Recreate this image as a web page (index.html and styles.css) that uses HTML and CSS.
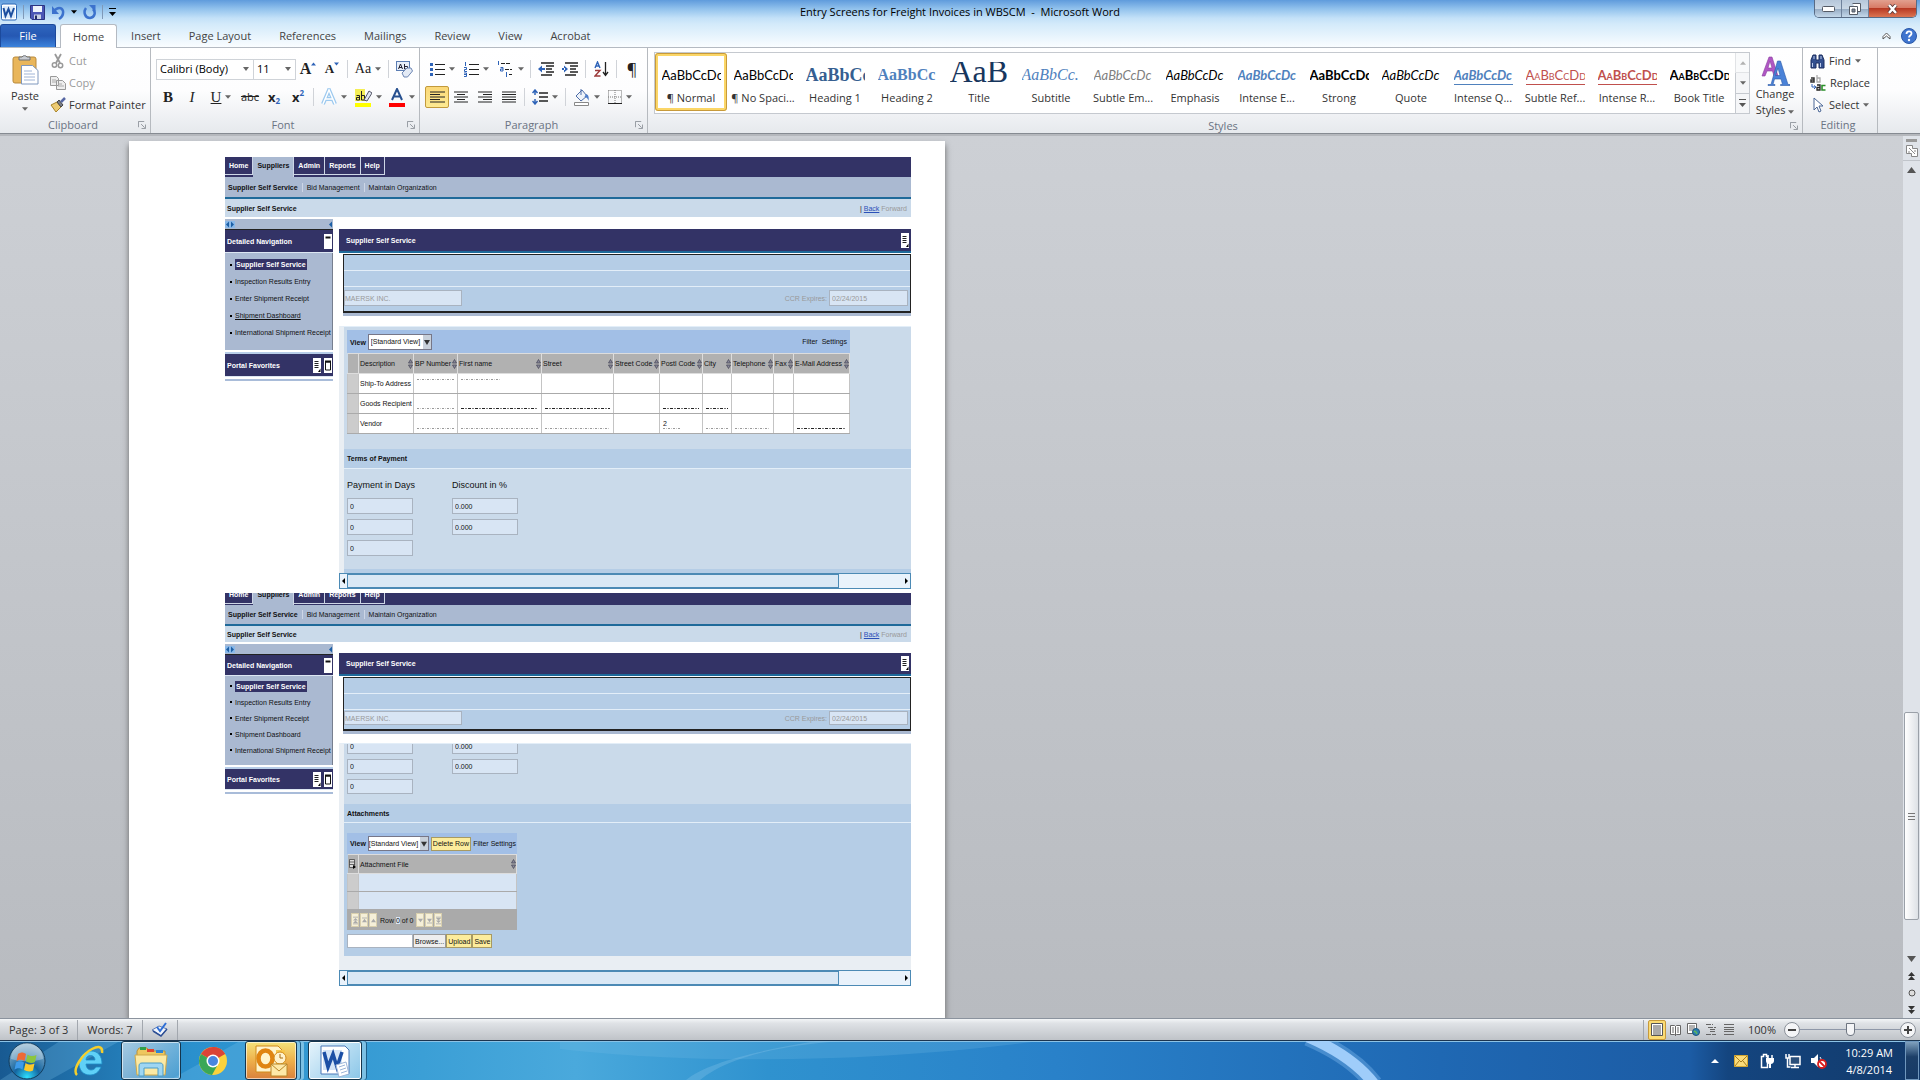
FILE: index.html
```
<!DOCTYPE html>
<html lang="en">
<head>
    <meta charset="UTF-8">
    <meta name="viewport" content="width=device-width, initial-scale=1.0">
    <title>Entry Screens for Freight Invoices in WBSCM - Microsoft Word</title>
    <link rel="stylesheet" href="styles.css">
</head>
<body>

    <!-- shared icons -->
    <svg class="sprite" aria-hidden="true">
        <symbol id="caret" viewBox="0 0 7 4"><path d="M0 0h7L3.500 4z" fill="#666"/></symbol>
        <symbol id="launcher" viewBox="0 0 9 9"><path d="M.5 7V.5H7M8.500 4v4.500H4M3.500 3.500l4 4" fill="none" stroke="#8a8f96"/></symbol>
        <symbol id="word" viewBox="0 0 16 18"><rect x=".5" y="1" width="15" height="16" rx="1.500" fill="#fff" stroke="#2b66b5"/><rect x="2" y="3" width="12" height="12" fill="#dcebfa"/><path d="M2.500 5l2 8 3-7 2.500 7L13 5" fill="none" stroke="#1d4f9f" stroke-width="2"/></symbol>
        <symbol id="sort" viewBox="0 0 5 10"><path d="M.5 4l2-3.500 2 3.500zM.5 6l2 3.500 2-3.500z" fill="#889" stroke="#445" stroke-width=".7"/></symbol>
        <symbol id="menu-page" viewBox="0 0 8 15"><path d="M0 0h8v15H0z" fill="#fff"/><path d="M1.500 3.500h4M1.500 5.500h4M1.500 7.500h4M1.500 9.500h4" stroke="#222"/><path d="M7.500 10.500v3.500H5z"/></symbol>
        <symbol id="window-min" viewBox="0 0 8 15"><path d="M0 0h8v15H0z" fill="#fff"/><path d="M1.500 3.500h5" stroke="#111" stroke-width="2"/></symbol>
        <symbol id="window-max" viewBox="0 0 8 15"><path d="M0 0h8v15H0z" fill="#fff"/><path d="M1.500 4v8h5V4z" fill="none" stroke="#111"/><path d="M1 3.500h6" stroke="#111" stroke-width="2"/></symbol>
        <symbol id="arrow-left" viewBox="0 0 4 8"><path d="M4 0v8L0 4z"/></symbol>
        <symbol id="arrow-right" viewBox="0 0 4 8"><path d="M0 0v8l4-4z"/></symbol>
        <symbol id="lines" viewBox="0 0 14 12"><path d="M0 1h14M0 3.500h14M0 6h14M0 8.500h14M0 11h14" stroke="#222" stroke-width="1.200"/></symbol>
    </svg>

    <header class="titlebar">
        <div class="quick-access">
            <svg class="app-icon" viewBox="0 0 16 18"><use href="#word"/></svg>
            <span class="qa-sep"></span>
            <button class="qa" aria-label="Save"><svg width="15" height="15" viewBox="0 0 15 15"><path d="M.5.500h14v14H2l-1.500-1.500z" fill="#4a55b5" stroke="#2b3380"/><path d="M3 1h9v6H3z" fill="#eef3fb"/><path d="M4 9.500h7V14H4z" fill="#c8d0e4"/><path d="M5 10.500h2V14H5z" fill="#222a66"/></svg></button>
            <button class="qa" aria-label="Undo"><svg width="14" height="15" viewBox="0 0 14 15"><path d="M3 6c3-4 8-4 9 0 .5 3-1 6-4 8" fill="none" stroke="#3c72cd" stroke-width="2.500"/><path d="M1 1v8h7z" fill="#3c72cd"/></svg></button>
            <svg class="qa-caret" viewBox="0 0 7 4"><path d="M0 0h7L3.500 4z"/></svg>
            <button class="qa" aria-label="Repeat"><svg width="13" height="15" viewBox="0 0 13 15"><path d="M3 3c-3 4-1 10 4 10 5-.5 6-6 3-9" fill="none" stroke="#3c72cd" stroke-width="2.500"/><path d="M6 0h6.500v7z" fill="#3c72cd"/></svg></button>
            <span class="qa-sep"></span>
            <button class="qa" aria-label="Customize"><svg width="7" height="8" viewBox="0 0 7 8"><path d="M0 .500h7" stroke="#000"/><path d="M0 4h7L3.500 8z"/></svg></button>
        </div>
        <h1 class="doc-title">Entry Screens for Freight Invoices in WBSCM&nbsp; -&nbsp; Microsoft Word</h1>
        <div class="window-buttons">
            <button aria-label="Minimize"><svg width="13" height="6" viewBox="0 0 13 6"><rect x=".5" y=".5" width="12" height="5" rx="1" fill="#fff" stroke="#555b66"/></svg></button>
            <button aria-label="Restore"><svg width="12" height="12" viewBox="0 0 12 12"><path d="M3.500.500h8v8h-3M.5 3.500h8v8h-8z" fill="#fff" stroke="#555b66"/><path d="M3 6h3v3H3z" fill="#7d8796" stroke="#555b66"/></svg></button>
            <button class="close" aria-label="Close"><svg width="11" height="10" viewBox="0 0 11 10"><path d="M2 1l7 8M9 1L2 9" stroke="#533" stroke-width="4"/><path d="M2 1l7 8M9 1L2 9" stroke="#fff" stroke-width="2.500"/></svg></button>
        </div>
    </header>

    <nav class="ribbon-tabs">
        <button class="file-tab">File</button>
        <button class="active">Home</button>
        <button>Insert</button>
        <button>Page Layout</button>
        <button>References</button>
        <button>Mailings</button>
        <button>Review</button>
        <button>View</button>
        <button>Acrobat</button>
        <span class="spacer"></span>
        <button class="mini" aria-label="Minimize the Ribbon"><svg width="9" height="8" viewBox="0 0 9 8"><path d="M1 4.500L4.500 1 8 4.500V7L4.500 4 1 7z" fill="#fff" stroke="#555"/></svg></button>
        <button class="mini" aria-label="Help"><svg width="16" height="16" viewBox="0 0 16 16"><circle cx="8" cy="8" r="7.500" fill="#3f75cf" stroke="#2a58a8"/><path d="M5.500 6c0-3.500 5-3.500 5-.5 0 2-2.500 2-2.500 4" fill="none" stroke="#fff" stroke-width="1.800"/><circle cx="8" cy="12" r="1.200" fill="#fff"/></svg></button>
    </nav>

    <section class="ribbon">
        <div class="group clipboard">
            <div class="group-body">
                <button class="big paste">
                    <svg width="27" height="31" viewBox="0 0 27 31"><rect x="1" y="3" width="23" height="26" rx="2" fill="#e9b65b" stroke="#b98a3c"/><path d="M7 6V3h3a3 3 0 015 0h3v3z" fill="#c9ccd1" stroke="#6c7076"/><path d="M9.500 11.500h11l5.500 5V30H9.500z" fill="#fff" stroke="#7f97bd"/><path d="M12 17h8M12 20h11M12 23h11M12 26h11" stroke="#9fb4d6"/></svg>
                    <span>Paste</span>
                    <svg class="caret"><use href="#caret"/></svg>
                </button>
                <div class="stack">
                    <button class="small dim"><svg width="16" height="16" viewBox="0 0 16 16"><path d="M5 1l5 9M11 1L6 10" stroke="#999" stroke-width="1.800"/><circle cx="4.500" cy="12" r="2.200" fill="none" stroke="#999" stroke-width="1.500"/><circle cx="10.500" cy="12.500" r="2.200" fill="none" stroke="#999" stroke-width="1.500"/></svg>Cut</button>
                    <button class="small dim"><svg width="16" height="16" viewBox="0 0 16 16"><path d="M.5 1.500h6l2 2v7h-8zM6.500 5.500h6l3 3v6h-9z" fill="#eee" stroke="#999"/><path d="M2 5h4M2 7h4M8 9h4M8 11h6" stroke="#aaa"/></svg>Copy</button>
                    <button class="small"><svg width="16" height="16" viewBox="0 0 16 16"><path d="M1 8l6-3 4 5-5 5z" fill="#edcb72" stroke="#a98427"/><path d="M7 5l2-2 4 5-2 2z" fill="#777c88" stroke="#444"/><path d="M11 5l4-4" stroke="#5666a3" stroke-width="2.500"/></svg>Format Painter</button>
                </div>
            </div>
            <footer>Clipboard<svg class="launcher"><use href="#launcher"/></svg></footer>
        </div>

        <div class="group font">
            <div class="group-body rows">
                <div class="tools">
                    <select class="font-name" aria-label="Font"><option>Calibri (Body)</option></select>
                    <select class="font-size" aria-label="Font Size"><option>11</option></select>
                    <button class="tool grow" aria-label="Grow Font"><b>A</b><svg width="5" height="4" viewBox="0 0 7 4"><path d="M0 4h7L3.500 0z" fill="#2e63b8"/></svg></button>
                    <button class="tool shrink" aria-label="Shrink Font"><b>A</b><svg width="5" height="4" viewBox="0 0 7 4"><path d="M0 0h7L3.500 4z" fill="#2e63b8"/></svg></button>
                    <span class="sep"></span>
                    <button class="tool wide serif-aa">Aa<svg class="caret"><use href="#caret"/></svg></button>
                    <span class="sep"></span>
                    <button class="tool" aria-label="Clear Formatting"><svg width="17" height="17" viewBox="0 0 17 17"><rect x=".5" y=".5" width="13" height="9" fill="#e9f0fa" stroke="#5b7db3"/><path d="M2.500 8l2-5 2 5M3 6.500h3M8.500 3v5h3V5.500h-3" fill="none" stroke="#223"/><path d="M6 12l5-5h4l1.500 3-5 6H8z" fill="#e3eaf5" stroke="#6c85b3"/></svg></button>
                </div>
                <div class="tools">
                    <button class="tool glyph"><b>B</b></button>
                    <button class="tool glyph"><i>I</i></button>
                    <button class="tool glyph with-drop"><u>U</u><svg class="caret"><use href="#caret"/></svg></button>
                    <button class="tool strike"><s>abc</s></button>
                    <button class="tool script">x<sub>2</sub></button>
                    <button class="tool script">x<sup>2</sup></button>
                    <span class="sep"></span>
                    <button class="tool with-drop" aria-label="Text Effects"><svg width="16" height="18" viewBox="0 0 16 18"><path d="M2 16L8 2l6 14M4.500 11h7" fill="none" stroke="#9cc9ef" stroke-width="4"/><path d="M2 16L8 2l6 14M4.500 11h7" fill="none" stroke="#fff" stroke-width="1.500"/></svg><svg class="caret"><use href="#caret"/></svg></button>
                    <button class="tool with-drop highlight" aria-label="Text Highlight Color"><svg width="17" height="19" viewBox="0 0 17 19"><path d="M0 1h10v12H0z" fill="#f4ee55"/><path d="M1.500 7.500h3V12h-3v-2.500h3M6.500 3v9h3V7.500h-3" fill="none" stroke="#222"/><path d="M9 12l5-9 3 2-5 8z" fill="#dfe7f3" stroke="#556"/><path d="M0 15h16v4H0z" fill="#ff0"/></svg><svg class="caret"><use href="#caret"/></svg></button>
                    <button class="tool with-drop" aria-label="Font Color"><svg width="16" height="19" viewBox="0 0 16 19"><path d="M3 12L8 1l5 11M5 8.500h6" fill="none" stroke="#27508f" stroke-width="2"/><path d="M0 15h16v4H0z" fill="red"/></svg><svg class="caret"><use href="#caret"/></svg></button>
                </div>
            </div>
            <footer>Font<svg class="launcher"><use href="#launcher"/></svg></footer>
        </div>

        <div class="group paragraph">
            <div class="group-body rows">
                <div class="tools">
                    <button class="tool wide" aria-label="Bullets"><svg width="15" height="14" viewBox="0 0 15 14"><path d="M0 1h3v3H0zM0 6h3v3H0zM0 11h3v3H0z" fill="#2e63b8"/><path d="M5 2.500h10M5 7.500h10M5 12.500h10" stroke="#222"/></svg><svg class="caret"><use href="#caret"/></svg></button>
                    <button class="tool wide" aria-label="Numbering"><svg width="15" height="15" viewBox="0 0 15 15"><path d="M1.500 0v4M0 5.500h2.500v2H.5v2h2.500M0 11h2.500v3.500H0M0 12.500h2" fill="none" stroke="#2e63b8"/><path d="M5 2.500h10M5 7.500h10M5 12.500h10" stroke="#222"/></svg><svg class="caret"><use href="#caret"/></svg></button>
                    <button class="tool wide" aria-label="Multilevel List"><svg width="17" height="16" viewBox="0 0 17 16"><path d="M1.500 0v4M3.500 6.500H6V10H3.500V8H6M9.500 11v5" fill="none" stroke="#2e63b8"/><path d="M4 2.500h9M8 8.500h7M12 13.500h3" stroke="#222" stroke-dasharray="4 1"/></svg><svg class="caret"><use href="#caret"/></svg></button>
                    <span class="sep"></span>
                    <button class="tool" aria-label="Decrease Indent"><svg width="16" height="14" viewBox="0 0 16 14"><path d="M3 1h13M8 4h8M8 7h6M8 10h8M3 13h11" stroke="#222" stroke-width="1.500"/><path d="M0 7l4-3.500v7zM3 6h4v2H3z" fill="#2e63b8"/></svg></button>
                    <button class="tool" aria-label="Increase Indent"><svg width="16" height="14" viewBox="0 0 16 14"><path d="M3 1h13M8 4h8M8 7h6M8 10h8M3 13h11" stroke="#222" stroke-width="1.500"/><path d="M6 7L2 3.500v7zM0 6h3v2H0z" fill="#2e63b8"/></svg></button>
                    <span class="sep"></span>
                    <button class="tool" aria-label="Sort"><svg width="15" height="16" viewBox="0 0 15 16"><path d="M1 7l2.500-6L6 7M2 5h3" fill="none" stroke="#2e63b8" stroke-width="1.400"/><path d="M1 9.500h5l-5 5.500h5.500" fill="none" stroke="#9c3a3a" stroke-width="1.400"/><path d="M11.500 1v13M9 11l2.500 3.500L14 11" fill="none" stroke="#222" stroke-width="1.300"/></svg></button>
                    <span class="sep"></span>
                    <button class="tool pilcrow">¶</button>
                </div>
                <div class="tools">
                    <button class="tool pressed" aria-label="Align Left"><svg width="15" height="12" viewBox="0 0 15 12"><path d="M0 1h15M0 3.500h10M0 6h15M0 8.500h10M0 11h15" stroke="#222" stroke-width="1.200"/></svg></button>
                    <button class="tool" aria-label="Center"><svg width="14" height="12" viewBox="0 0 14 12"><path d="M0 1h14M3 3.500h8M0 6h14M3 8.500h8M0 11h14" stroke="#222" stroke-width="1.200"/></svg></button>
                    <button class="tool" aria-label="Align Right"><svg width="14" height="12" viewBox="0 0 14 12"><path d="M0 1h14M5 3.500h9M0 6h14M5 8.500h9M0 11h14" stroke="#222" stroke-width="1.200"/></svg></button>
                    <button class="tool" aria-label="Justify"><svg width="14" height="12"><use href="#lines"/></svg></button>
                    <span class="sep"></span>
                    <button class="tool wide" aria-label="Line Spacing"><svg width="16" height="16" viewBox="0 0 16 16"><path d="M3 1v5M3 10v5M.5 4L3 1l2.500 3M.5 12L3 15l2.500-3" fill="none" stroke="#2e63b8" stroke-width="1.500"/><path d="M7 4h9M7 8h9M7 12h9" stroke="#222" stroke-width="1.300"/></svg><svg class="caret"><use href="#caret"/></svg></button>
                    <span class="sep"></span>
                    <button class="tool wide" aria-label="Shading"><svg width="17" height="18" viewBox="0 0 17 18"><path d="M3 8l6-6 5 6-6 5z" fill="#eef3fa" stroke="#4d6da8"/><path d="M8 1v6" stroke="#4d6da8"/><path d="M13 6c3 1 3 4 2.500 7-1-3-2-4-4-4z" fill="#4d7cc9"/><path d="M1.500 14.500h14v3h-14z" fill="#fff" stroke="#888"/></svg><svg class="caret"><use href="#caret"/></svg></button>
                    <button class="tool wide" aria-label="Borders"><svg width="14" height="14" viewBox="0 0 14 14"><path d="M.5.500h13v13M.5.500v13M7 0v13M0 7h14" fill="none" stroke="#777" stroke-dasharray="1 1"/><path d="M0 13.500h14" stroke="#222"/></svg><svg class="caret"><use href="#caret"/></svg></button>
                </div>
            </div>
            <footer>Paragraph<svg class="launcher"><use href="#launcher"/></svg></footer>
        </div>

        <div class="group styles">
            <div class="group-body">
                <div class="gallery">
                    <button class="style current"><span class="sample">AaBbCcDc</span><span>¶ Normal</span></button>
                    <button class="style"><span class="sample">AaBbCcDc</span><span>¶ No Spaci...</span></button>
                    <button class="style"><span class="sample heading1">AaBbCc</span><span>Heading 1</span></button>
                    <button class="style"><span class="sample heading2">AaBbCc</span><span>Heading 2</span></button>
                    <button class="style"><span class="sample title">AaB</span><span>Title</span></button>
                    <button class="style"><span class="sample subtitle">AaBbCc.</span><span>Subtitle</span></button>
                    <button class="style"><span class="sample subtle">AaBbCcDc</span><span>Subtle Em...</span></button>
                    <button class="style"><span class="sample em">AaBbCcDc</span><span>Emphasis</span></button>
                    <button class="style"><span class="sample intense">AaBbCcDc</span><span>Intense E...</span></button>
                    <button class="style"><span class="sample strong">AaBbCcDc</span><span>Strong</span></button>
                    <button class="style"><span class="sample em">AaBbCcDc</span><span>Quote</span></button>
                    <button class="style"><span class="sample intense lined">AaBbCcDc</span><span>Intense Q...</span></button>
                    <button class="style"><span class="sample reference lined">AaBbCcDd</span><span>Subtle Ref...</span></button>
                    <button class="style"><span class="sample reference strong lined">AaBbCcDd</span><span>Intense R...</span></button>
                    <button class="style"><span class="sample book strong">AaBbCcDd</span><span>Book Title</span></button>
                    <div class="gallery-scroll">
                        <button class="off" aria-label="Row up"><svg class="caret up"><use href="#caret"/></svg></button>
                        <button aria-label="Row down"><svg class="caret"><use href="#caret"/></svg></button>
                        <button aria-label="More styles"><svg width="7" height="8" viewBox="0 0 7 8"><path d="M0 .500h7" stroke="#555"/><path d="M0 4h7L3.500 8z" fill="#555"/></svg></button>
                    </div>
                </div>
                <button class="big change">
                    <svg width="29" height="30" viewBox="0 0 29 30"><path d="M1 20L8 1h3l6 19h-4l-1.500-5H6l-2 5zM7 12h4L9 5z" fill="#b057c4" stroke="#8a3c9d" stroke-width=".6"/><path d="M7 28.500h3L16.500 5h3L27 28.500h2v1H19.500v-1h2L20 23h-6.500L12 28.500h2v1H7zM14.500 19.500h4.500L17 12z" fill="#4a82d8" stroke="#2c5ba8" stroke-width=".6"/></svg>
                    <span>Change</span>
                    <span>Styles <svg class="caret"><use href="#caret"/></svg></span>
                </button>
            </div>
            <footer>Styles<svg class="launcher"><use href="#launcher"/></svg></footer>
        </div>

        <div class="group editing">
            <div class="group-body">
                <div class="stack">
                    <button class="small"><svg width="15" height="15" viewBox="0 0 15 15"><path d="M1 6l2-5h3v5h3V1h3l2 5v8H9V9H6v5H1z" fill="#34508f" stroke="#1c2f60"/><path d="M2.500 9v4M10.500 9v4M4 2v3M11 2v3" stroke="#b9c9ea"/></svg>Find <svg class="caret"><use href="#caret"/></svg></button>
                    <button class="small"><svg width="16" height="16" viewBox="0 0 16 16"><path d="M1 3h3v4H1V5h3" fill="none" stroke="#333" stroke-width="1.500"/><path d="M7 0v7h3V3H7" fill="none" stroke="#aaa" stroke-width="1.300"/><path d="M2 9v3h3M4 10.500L6 12l-2 2" fill="none" stroke="#2e63b8"/><path d="M7 10h3v5H7v-2.500h3" fill="none" stroke="#222" stroke-width="1.300"/><path d="M15.500 10.500H12V15h3.500" fill="none" stroke="#2a8f2a" stroke-width="1.600"/></svg>Replace</button>
                    <button class="small"><svg width="15" height="16" viewBox="0 0 15 16"><path d="M4 1v12l3-3 2 5 2-1-2-5h4z" fill="#fff" stroke="#4a6696"/></svg>Select <svg class="caret"><use href="#caret"/></svg></button>
                </div>
            </div>
            <footer>Editing</footer>
        </div>
    </section>

    <main class="workspace">
        <div class="canvas">
            <article class="page">

                <section class="portal">
                    <nav class="top-tabs">
                        <a href="#">Home</a><a href="#" class="on">Suppliers</a><a href="#">Admin</a><a href="#">Reports</a><a href="#">Help</a>
                    </nav>
                    <nav class="sub-tabs">
                        <a href="#" class="on">Supplier Self Service</a><a href="#">Bid Management</a><a href="#">Maintain Organization</a>
                    </nav>
                    <div class="crumb">
                        <b>Supplier Self Service</b>
                        <span class="history">| <a href="#">Back</a> <span>Forward</span></span>
                    </div>
                    <div class="portal-body">
                        <aside>
                            <div class="collapse"><span><svg><use href="#arrow-left"/></svg><svg><use href="#arrow-right"/></svg></span><svg><use href="#arrow-left"/></svg></div>
                            <h2>Detailed Navigation <svg class="pic-icon"><use href="#window-min"/></svg></h2>
                            <ul>
                                <li><a href="#" class="here">Supplier Self Service</a></li>
                                <li><a href="#">Inspection Results Entry</a></li>
                                <li><a href="#">Enter Shipment Receipt</a></li>
                                <li><a href="#" class="hover">Shipment Dashboard</a></li>
                                <li><a href="#">International Shipment Receipt</a></li>
                            </ul>
                            <h2>Portal Favorites <span><svg class="pic-icon"><use href="#menu-page"/></svg><svg class="pic-icon"><use href="#window-max"/></svg></span></h2>
                        </aside>
                        <div class="content">
                            <h2>Supplier Self Service <svg class="pic-icon"><use href="#menu-page"/></svg></h2>
                            <div class="vendor">
                                <div></div>
                                <div></div>
                                <div class="vendor-row">
                                    <input class="vendor-name" aria-label="Vendor" value="MAERSK INC." disabled>
                                    <label>CCR Expires: <input value="02/24/2015" disabled></label>
                                </div>
                            </div>
                            <div class="frame">
                                <div class="frame-body">
                                    <div class="partners">
                                        <div class="toolbar">
                                            <label>View <select><option>[Standard View]</option></select></label>
                                            <span class="links"><a href="#">Filter</a><a href="#">Settings</a></span>
                                        </div>
                                        <table>
                                            <thead>
                                                <tr>
                                                    <th></th>
                                                    <th><span>Description<svg><use href="#sort"/></svg></span></th>
                                                    <th><span>BP Number<svg><use href="#sort"/></svg></span></th>
                                                    <th><span>First name<svg><use href="#sort"/></svg></span></th>
                                                    <th><span>Street<svg><use href="#sort"/></svg></span></th>
                                                    <th><span>Street Code<svg><use href="#sort"/></svg></span></th>
                                                    <th><span>Postl Code<svg><use href="#sort"/></svg></span></th>
                                                    <th><span>City<svg><use href="#sort"/></svg></span></th>
                                                    <th><span>Telephone<svg><use href="#sort"/></svg></span></th>
                                                    <th><span>Fax<svg><use href="#sort"/></svg></span></th>
                                                    <th><span>E-Mail Address<svg><use href="#sort"/></svg></span></th>
                                                </tr>
                                            </thead>
                                            <tbody>
                                                <tr class="trace-top"><td></td><td>Ship-To Address</td><td><hr></td><td><hr class="half"></td><td></td><td></td><td></td><td></td><td></td><td></td><td></td></tr>
                                                <tr><td></td><td>Goods Recipient</td><td><hr></td><td><hr class="dark"></td><td><hr class="dark"></td><td></td><td><hr class="dark"></td><td><hr class="dark"></td><td></td><td></td><td></td></tr>
                                                <tr><td></td><td>Vendor</td><td><hr></td><td><hr></td><td><hr></td><td></td><td>2<hr class="half"></td><td><hr></td><td><hr></td><td></td><td><hr class="dark"></td></tr>
                                            </tbody>
                                        </table>
                                    </div>
                                    <h3>Terms of Payment</h3>
                                    <div class="terms">
                                        <div>
                                            <h4>Payment in Days</h4>
                                            <input aria-label="Days 1" value="0">
                                            <input aria-label="Days 2" value="0">
                                            <input aria-label="Days 3" value="0">
                                        </div>
                                        <div>
                                            <h4>Discount in %</h4>
                                            <input aria-label="Discount 1" value="0.000">
                                            <input aria-label="Discount 2" value="0.000">
                                        </div>
                                    </div>
                                    <div class="next-band"></div>
                                </div>
                                <div class="hscroll"><svg><use href="#arrow-left"/></svg><span></span><svg><use href="#arrow-right"/></svg></div>
                            </div>
                        </div>
                    </div>
                </section>

                <section class="portal second">
                    <nav class="top-tabs">
                        <a href="#">Home</a><a href="#" class="on">Suppliers</a><a href="#">Admin</a><a href="#">Reports</a><a href="#">Help</a>
                    </nav>
                    <nav class="sub-tabs">
                        <a href="#" class="on">Supplier Self Service</a><a href="#">Bid Management</a><a href="#">Maintain Organization</a>
                    </nav>
                    <div class="crumb">
                        <b>Supplier Self Service</b>
                        <span class="history">| <a href="#">Back</a> <span>Forward</span></span>
                    </div>
                    <div class="portal-body">
                        <aside>
                            <div class="collapse"><span><svg><use href="#arrow-left"/></svg><svg><use href="#arrow-right"/></svg></span><svg><use href="#arrow-left"/></svg></div>
                            <h2>Detailed Navigation <svg class="pic-icon"><use href="#window-min"/></svg></h2>
                            <ul>
                                <li><a href="#" class="here">Supplier Self Service</a></li>
                                <li><a href="#">Inspection Results Entry</a></li>
                                <li><a href="#">Enter Shipment Receipt</a></li>
                                <li><a href="#">Shipment Dashboard</a></li>
                                <li><a href="#">International Shipment Receipt</a></li>
                            </ul>
                            <h2>Portal Favorites <span><svg class="pic-icon"><use href="#menu-page"/></svg><svg class="pic-icon"><use href="#window-max"/></svg></span></h2>
                        </aside>
                        <div class="content">
                            <h2>Supplier Self Service <svg class="pic-icon"><use href="#menu-page"/></svg></h2>
                            <div class="vendor">
                                <div></div>
                                <div></div>
                                <div class="vendor-row">
                                    <input class="vendor-name" aria-label="Vendor" value="MAERSK INC." disabled>
                                    <label>CCR Expires: <input value="02/24/2015" disabled></label>
                                </div>
                            </div>
                            <div class="frame">
                                <div class="frame-body">
                                    <div class="terms scrolled">
                                        <div>
                                            <input aria-label="Days 1" value="0">
                                            <input aria-label="Days 2" value="0">
                                            <input aria-label="Days 3" value="0">
                                        </div>
                                        <div>
                                            <input aria-label="Discount 1" value="0.000">
                                            <input aria-label="Discount 2" value="0.000">
                                        </div>
                                    </div>
                                    <h3>Attachments</h3>
                                    <div class="attachments">
                                        <div class="attach-table">
                                            <div class="toolbar">
                                                <label>View <select><option>[Standard View]</option></select></label>
                                                <button class="yellow">Delete Row</button>
                                                <span class="links"><a href="#">Filter</a><a href="#">Settings</a></span>
                                            </div>
                                            <table>
                                                <thead>
                                                    <tr>
                                                        <th><svg class="select-all" viewBox="0 0 7 10"><path d="M.5.500h5v8h-5zM.5 3h5M.5 5.500h5" fill="#ddd" stroke="#333" stroke-width=".7"/><path d="M4 6v4l3-2z"/></svg></th>
                                                        <th><span>Attachment File<svg><use href="#sort"/></svg></span></th>
                                                    </tr>
                                                </thead>
                                                <tbody>
                                                    <tr><td></td><td></td></tr>
                                                    <tr><td></td><td></td></tr>
                                                </tbody>
                                            </table>
                                            <div class="pager">
                                                <button disabled aria-label="First row"><svg viewBox="0 0 6 10"><path d="M0 1h6M0 9h6" stroke="#aaa"/><path d="M0 5h6L3 2zM0 8h6L3 5z" fill="#aaa"/></svg></button>
                                                <button disabled aria-label="Page up"><svg viewBox="0 0 6 10"><path d="M0 2h6" stroke="#aaa"/><path d="M0 7h6L3 3z" fill="#aaa"/></svg></button>
                                                <button disabled aria-label="Row up"><svg viewBox="0 0 6 10"><path d="M0 7h6L3 3z" fill="#aaa"/></svg></button>
                                                <span>Row <em>0</em> of 0</span>
                                                <button disabled aria-label="Row down"><svg viewBox="0 0 6 10"><path d="M0 3h6L3 7z" fill="#aaa"/></svg></button>
                                                <button disabled aria-label="Page down"><svg viewBox="0 0 6 10"><path d="M0 8h6" stroke="#aaa"/><path d="M0 3h6L3 7z" fill="#aaa"/></svg></button>
                                                <button disabled aria-label="Last row"><svg viewBox="0 0 6 10"><path d="M0 1h6M0 9h6" stroke="#aaa"/><path d="M0 2h6L3 5zM0 5h6L3 8z" fill="#aaa"/></svg></button>
                                            </div>
                                        </div>
                                        <div class="upload">
                                            <input aria-label="Attachment file">
                                            <button class="browse">Browse...</button>
                                            <button class="yellow">Upload</button>
                                            <button class="yellow">Save</button>
                                        </div>
                                    </div>
                                </div>
                                <div class="hscroll"><svg><use href="#arrow-left"/></svg><span></span><svg><use href="#arrow-right"/></svg></div>
                            </div>
                        </div>
                    </div>
                </section>

            </article>
        </div>
        <div class="vscroll">
            <button class="split" aria-label="Split"></button>
            <button class="ruler" aria-label="View Ruler"><svg width="12" height="14" viewBox="0 0 12 14"><path d="M.5 1.500h6v3h5v8h-6v-3h-5z" fill="#fff" stroke="#888"/><path d="M3 4l6 6M3 7v2M9 6v2" stroke="#888"/></svg></button>
            <button aria-label="Scroll up"><svg width="9" height="6" viewBox="0 0 9 6"><path d="M0 6h9L4.500 0z" fill="#555"/></svg></button>
            <div class="track"><span class="thumb"><svg width="7" height="7" viewBox="0 0 7 7"><path d="M0 .500h7M0 3.500h7M0 6.500h7" stroke="#777"/></svg></span></div>
            <button aria-label="Scroll down"><svg width="9" height="6" viewBox="0 0 9 6"><path d="M0 0h9L4.500 6z" fill="#555"/></svg></button>
            <button aria-label="Previous Page"><svg width="7" height="8" viewBox="0 0 7 8"><path d="M0 4h7L3.500 0zM0 8h7L3.500 4z" fill="#333"/></svg></button>
            <button aria-label="Select Browse Object"><svg width="8" height="8" viewBox="0 0 8 8"><circle cx="4" cy="4" r="3" fill="#ddd" stroke="#555"/></svg></button>
            <button aria-label="Next Page"><svg width="7" height="8" viewBox="0 0 7 8"><path d="M0 0h7L3.500 4zM0 4h7L3.500 8z" fill="#333"/></svg></button>
        </div>
    </main>

    <footer class="statusbar">
        <button>Page: 3 of 3</button>
        <button>Words: 7</button>
        <button aria-label="Proofing"><svg width="16" height="15" viewBox="0 0 16 15"><path d="M0 8l7-4 8 3-6 7z" fill="#f2f6fc" stroke="#5d7bb5"/><path d="M1 9l8 5 6-7" fill="none" stroke="#2d4f94" stroke-width="1.500"/><path d="M5 5l3 4 6-8" fill="none" stroke="#2f6fd6" stroke-width="2"/></svg></button>
        <span class="spacer"></span>
        <div class="views">
            <button class="on" aria-label="Print Layout"><svg width="12" height="13" viewBox="0 0 12 13"><path d="M.5.500h11v12H.5z" fill="#fff" stroke="#555"/><path d="M2 3h8M2 5h8M2 7h8M2 9h8M2 11h8" stroke="#555"/></svg></button>
            <button aria-label="Full Screen Reading"><svg width="11" height="12" viewBox="0 0 11 12"><path d="M.5 1.500h4l1 1 1-1h4v9h-4l-1 1-1-1h-4zM5.500 2v10" fill="#fff" stroke="#666"/><path d="M2 4h2M2 6h2M2 8h2M7 4h2M7 6h2M7 8h2" stroke="#666"/></svg></button>
            <button aria-label="Web Layout"><svg width="13" height="13" viewBox="0 0 13 13"><path d="M.5.500h9v10h-9z" fill="#fff" stroke="#666"/><path d="M2 3h6M2 5h6M2 7h6" stroke="#666"/><circle cx="9" cy="9" r="3.500" fill="#2e7fb0" stroke="#1c557c"/><path d="M7 8l2 1 1 2" stroke="#5cb85c" stroke-width="1.500" fill="none"/></svg></button>
            <button aria-label="Outline"><svg width="10" height="11" viewBox="0 0 10 11"><path d="M0 .500h7M2 3.500h8M4 5.500h6M4 7.500h5M0 10.500h10" stroke="#666" stroke-dasharray="5 1"/></svg></button>
            <button aria-label="Draft"><svg width="10" height="11" viewBox="0 0 10 11"><path d="M0 .500h10M0 3.500h10M0 5.500h10M0 7.500h10M0 10.500h10" stroke="#666"/></svg></button>
        </div>
        <button class="percent">100%</button>
        <button class="zoom-button" aria-label="Zoom out"><svg width="8" height="8" viewBox="0 0 8 8"><path d="M0 4h8" stroke="#444" stroke-width="2"/></svg></button>
        <input class="zoom-slider" type="range" min="10" max="190" value="100" aria-label="Zoom">
        <button class="zoom-button" aria-label="Zoom in"><svg width="8" height="8" viewBox="0 0 8 8"><path d="M0 4h8M4 0v8" stroke="#444" stroke-width="2"/></svg></button>
    </footer>

    <footer class="taskbar">
        <svg class="glow" viewBox="0 0 1920 39" preserveAspectRatio="none" aria-hidden="true">
            <path d="M560 8c120 14 300 16 480-8H560z" fill="#7cc0ea" opacity=".22"/>
            <path d="M700 39c30-24 80-34 140-39h-24c-60 10-110 22-130 39z" fill="#9ad0f0" opacity=".25"/>
            <path d="M0 39L60 0h60L50 39zM170 39l70-39h60l-50 39z" fill="#8fd0f5" opacity=".22"/>
            <path d="M1308 -4C1336 8 1358 22 1374 43" fill="none" stroke="#7fb8ee" stroke-width="18" opacity=".4"/>
            <path d="M1308 -4C1336 8 1358 22 1374 43" fill="none" stroke="#a9d4ff" stroke-width="11" opacity=".9"/>
        </svg>
        <button class="task start" aria-label="Start">
            <svg width="38" height="38" viewBox="0 0 38 38"><defs><radialGradient id="orb" cx=".5" cy=".95" r=".9"><stop offset="0" stop-color="#2de0ff"/><stop offset=".4" stop-color="#1565a0"/><stop offset="1" stop-color="#8fb6cf"/></radialGradient></defs><circle cx="19" cy="19" r="18" fill="url(#orb)" stroke="#123c5c"/><path d="M3 17a16 16 0 0132 0c-10 3-22 3-32 0z" fill="#fff" opacity=".3"/><path d="M10 12c3-2 5-2 8 0l-1.500 7c-3-2-5-1.500-8 0z" fill="#ee6a35"/><path d="M19.500 12.500c3 2 6 2 9 .5L27 20c-3 1.500-6 1-9-.5z" fill="#8cc63f"/><path d="M8 20.500c3-1.500 5-2 8 0l-1.500 7c-3-2-5-1.500-8 0z" fill="#3e9bea"/><path d="M17.500 21c3 2 6 2 9 .5l-1.500 7c-3 1.500-6 1-9-.5z" fill="#fdc92b"/></svg>
        </button>
        <button class="task" aria-label="Internet Explorer">
            <svg width="32" height="32" viewBox="0 0 32 32"><path d="M27 22c-2 5-6 8-11 8C9 30 5 25 5 18S10 6 17 6s11 5 11 13H12c0 3 2 6 5 6 2 0 4-1 5-3zM12 15h9c0-3-2-4.500-4.500-4.500S12 12 12 15z" fill="#5fd0f7" stroke="#1f8ec8" stroke-width=".8"/><path d="M3 30C-2 25 8 9 18 4c6-3 11-3 10 4" fill="none" stroke="#f5cf2c" stroke-width="2.500"/></svg>
        </button>
        <button class="task open" aria-label="Windows Explorer">
            <svg width="34" height="32" viewBox="0 0 34 32"><path d="M5 3h8l2 3h16v20H3V6z" fill="#eec75e" stroke="#b8923a"/><path d="M6 2h6v3H6z" fill="#2ea04a"/><path d="M13 4h7v3h-7z" fill="#e0452f"/><path d="M22 5h7v3h-7z" fill="#2b84d6"/><path d="M1 10h32l-2 20H3z" fill="#fbe9a4" stroke="#cfa94a"/><path d="M5 31V21c0-2 1-3 3-3h18c2 0 3 1 3 3v10h-5v-8H10v8z" fill="#9fd6f2" stroke="#4a9cc7"/></svg>
        </button>
        <button class="task" aria-label="Chrome">
            <svg width="30" height="30" viewBox="0 0 30 30"><circle cx="15" cy="15" r="14" fill="#fbd23c"/><path d="M15 15L2.900 8A14 14 0 0127.100 8z" fill="#db4437"/><path d="M15 1a14 14 0 0112.100 7H15z" fill="#db4437"/><path d="M2.900 8A14 14 0 0014 29l5-9-4-5z" fill="#3aa757"/><circle cx="15" cy="15" r="6.500" fill="#fff"/><circle cx="15" cy="15" r="5" fill="#4a86e0"/></svg>
        </button>
        <button class="task open outlook" aria-label="Outlook">
            <svg width="34" height="34" viewBox="0 0 34 34"><path d="M2 2h22l6 6v20H2z" fill="#fff4cc" stroke="#d08a1a"/><path d="M22 6h9v20h-9z" fill="#f7c64b"/><ellipse cx="11.500" cy="14.500" rx="7" ry="8" fill="none" stroke="#e08512" stroke-width="4.500"/><circle cx="26" cy="14" r="6" fill="#fff2cc" stroke="#d08a1a"/><path d="M26 10v4h3" fill="none" stroke="#a66a10"/><path d="M17 20h16v12H17z" fill="#fde9a8" stroke="#b8862a"/><path d="M17 20l8 7 8-7" fill="none" stroke="#b8862a"/></svg>
        </button>
        <button class="task open word" aria-label="Word">
            <svg width="32" height="34" viewBox="0 0 32 34"><path d="M2 2h24l4 4v24H2z" fill="#fff" stroke="#4b78b8"/><path d="M4 6h19v20H4z" fill="#d5e5f7"/><path d="M5 8l4 15 5-13 4 13L23 8" fill="none" stroke="#1c4fa5" stroke-width="3.500"/><path d="M17 21l10-3 3 12-10 3z" fill="#fff" stroke="#9db5d8"/><path d="M20 23l6-2M21 26l6-2M22 29l6-2" stroke="#9db5d8"/></svg>
        </button>
        <span class="spacer"></span>
        <div class="tray">
            <button aria-label="Show hidden icons"><svg width="8" height="4" viewBox="0 0 8 4"><path d="M0 4h8L4 0z" fill="#fff"/></svg></button>
            <button aria-label="Mail"><svg width="14" height="12" viewBox="0 0 14 12"><path d="M.5.500h13v11H.5z" fill="#fbdc7a" stroke="#d5a832"/><path d="M1 1l6 6 6-6M1 11l4-5M13 11L9 6" fill="none" stroke="#a87c1c"/></svg></button>
            <button aria-label="Power"><svg width="14" height="16" viewBox="0 0 14 16"><path d="M1.500 3.500h2v-2h3v2h1v11h-6z" fill="none" stroke="#fff" stroke-width="1.500"/><path d="M8 5V2M12 5V2" stroke="#fff" stroke-width="1.500"/><path d="M6 5h8v3c0 2-2 3-3 3v4H9v-4c-1 0-3-1-3-3z" fill="#fff"/></svg></button>
            <button aria-label="Network"><svg width="16" height="16" viewBox="0 0 16 16"><path d="M5 3.500h10v8H5z" fill="#2b4f7a" stroke="#fff" stroke-width="1.500"/><path d="M10 12v2M6 14.500h8M1 1v4h3V1M2.500 5v9h3" fill="none" stroke="#fff" stroke-width="1.500"/></svg></button>
            <button aria-label="Volume"><svg width="16" height="16" viewBox="0 0 16 16"><path d="M0 5h3l4-4v13l-4-4H0z" fill="#fff"/><path d="M9 4c1.500 2 1.500 4 0 6" stroke="#fff" fill="none"/><circle cx="11" cy="11" r="4" fill="#fff" stroke="#d81e1e" stroke-width="1.800"/><path d="M8 8l6 6" stroke="#d81e1e" stroke-width="1.800"/></svg></button>
            <time>10:29 AM<br>4/8/2014</time>
        </div>
        <button class="show-desktop" aria-label="Show desktop"></button>
    </footer>

</body>
</html>
```
FILE: styles.css
```
* {
    box-sizing: border-box;
}
body {
    margin: 0;
    height: 100vh;
    display: flex;
    flex-direction: column;
    overflow: hidden;
    font-family: "Open Sans", "Noto Sans", sans-serif;
    font-size: 11px;
    line-height: 16px;
    color: #333;
    background: #c3c6ca;
    white-space: nowrap;
}
button, input, select {
    font: inherit;
    color: inherit;
    margin: 0;
    padding: 0;
    border: 0;
    background: none;
    border-radius: 0;
    outline: none;
}
button {
    display: flex;
    align-items: center;
    justify-content: center;
}
select {
    appearance: none;
}
h1, h2, h3, h4, ul, p {
    margin: 0;
    padding: 0;
    font-size: inherit;
}
svg {
    flex: none;
}
a {
    color: inherit;
    text-decoration: none;
}
.sprite {
    display: none;
}
.spacer {
    flex: 1;
}
.caret {
    width: 6px;
    height: 4px;
}

/* title bar */
.titlebar {
    display: grid;
    grid-template-columns: 1fr auto 1fr;
    height: 24px;
    background: linear-gradient(#5f9bdc, #8fc0ec 35%, #c3e1f8 75%, #d3eafa);
}
.quick-access {
    display: flex;
    align-items: center;
    gap: 6px;
    padding-left: 1px;
}
.app-icon {
    width: 16px;
    height: 18px;
}
.qa-sep {
    width: 1px;
    height: 14px;
    background: #7f99b8;
}
.qa-caret {
    width: 6px;
    height: 4px;
}
.doc-title {
    font-weight: normal;
    font-size: 11px;
    line-height: 24px;
    color: #000;
}
.window-buttons {
    justify-self: end;
    align-self: start;
    display: flex;
    height: 18px;
    margin-right: 3px;
    border: 1px solid #586b85;
    border-top: 0;
    border-radius: 0 0 5px 5px;
    overflow: hidden;
}
.window-buttons button {
    width: 27px;
    border-right: 1px solid #6f829c;
    background: linear-gradient(#b6c7da, #c9d7e5 50%, #93a9c2 51%, #c4d8ea);
}
.window-buttons .close {
    width: 47px;
    border-right: 0;
    background: linear-gradient(#e2a08f, #d87b66 45%, #b83a24 50%, #dc7552);
}

/* tabs */
.ribbon-tabs {
    display: flex;
    height: 24px;
    padding-right: 3px;
    border-bottom: 1px solid #b4bac2;
    background: linear-gradient(#d3eafa, #fafdff);
}
.ribbon-tabs button {
    padding: 0 14px;
    border: 0 solid transparent;
    border-radius: 3px 3px 0 0;
    color: #444;
}
.ribbon-tabs .file-tab {
    width: 56px;
    margin-right: 4px;
    color: #fff;
    border: 1px solid #1c4a9c;
    border-bottom: 0;
    background: linear-gradient(#2f66be, #2558b3 50%, #3c83dc);
}
.ribbon-tabs .active {
    height: 24px;
    padding: 0 12px;
    border: 1px solid #b4bac2;
    border-bottom: 0;
    background: #fff;
}
.ribbon-tabs .mini {
    padding: 0 5px;
}
.ribbon-tabs .mini:last-child {
    padding-right: 0;
}

/* ribbon */
.ribbon {
    display: flex;
    height: 86px;
    border-bottom: 1px solid #868b92;
    background: linear-gradient(#fff, #fdfdfe 50%, #e6e9ed);
}
.group {
    display: flex;
    flex-direction: column;
    border-right: 1px solid #b6babf;
}
.group-body {
    flex: 1;
    display: flex;
    padding-top: 2px;
}
.group footer {
    display: grid;
    grid-template-columns: 1fr auto 1fr;
    align-items: center;
    padding-right: 4px;
    height: 17px;
    color: #6a7383;
}
.group footer::before {
    content: "";
}
.launcher {
    justify-self: end;
    width: 8px;
    height: 8px;
}
.clipboard {
    width: 151px;
}
.font {
    width: 269px;
}
.paragraph {
    width: 228px;
}
.styles {
    width: 1155px;
}
.editing {
    width: 75px;
}
.big {
    flex-direction: column;
    justify-content: flex-start;
    padding-top: 4px;
    width: 50px;
    line-height: 16px;
}
.paste span {
    padding: 3px 0;
}
.stack {
    display: flex;
    flex-direction: column;
}
.small {
    height: 22px;
    justify-content: flex-start;
    gap: 3px;
}
.editing .small {
    gap: 4px;
    padding-left: 7px;
}
.dim {
    color: #9a9a9a;
}
.rows {
    flex-direction: column;
    gap: 6px;
    padding: 10px 0 0 5px;
}
.tools {
    display: flex;
    align-items: center;
    height: 22px;
}
.tool {
    width: 24px;
    height: 22px;
    gap: 4px;
    color: #222;
}
.wide, .with-drop {
    width: 34px;
}
.sep {
    width: 1px;
    height: 18px;
    margin: 0 3px;
    background: #d0d3d8;
}
.pressed {
    border: 1px solid #c29a3c;
    border-radius: 2px;
    background: linear-gradient(#fbd878, #fdea93);
}
.font-name, .font-size {
    height: 21px;
    padding-left: 3px;
    border: 1px solid #cfd3d8;
    color: #000;
    background: url("data:image/svg+xml,%3Csvg xmlns='http://www.w3.org/2000/svg' width='6' height='4'%3E%3Cpath d='M0 0h6L3 4z' fill='%23666'/%3E%3C/svg%3E") no-repeat right 4px center #fff;
}
.font-name {
    width: 98px;
}
.font-size {
    width: 42px;
    border-left: 0;
}
.grow, .shrink {
    gap: 0;
    align-items: flex-start;
    font-family: "Liberation Serif", serif;
    font-size: 16px;
    line-height: 22px;
}
.shrink {
    font-size: 13px;
}
.grow svg, .shrink svg {
    margin-top: 4px;
}
.serif-aa {
    font: 14px "Liberation Serif", serif;
}
.glyph {
    font: 15px "Liberation Serif", serif;
}
.strike {
    font-size: 11px;
}
.script {
    gap: 0;
    font-weight: bold;
    font-size: 13px;
}
.script sub, .script sup {
    font-size: 8px;
    line-height: 8px;
    color: #2e63b8;
}
.script sub {
    padding-top: 8px;
}
.script sup {
    padding-bottom: 8px;
}
.pilcrow {
    font-size: 16px;
}

/* style gallery */
.styles .group-body {
    padding: 4px 0 0 6px;
}
.gallery {
    display: flex;
    height: 62px;
    border: 1px solid #c5c9cf;
    background: #fff;
}
.style {
    flex-direction: column;
    width: 72px;
    height: 58px;
    padding-top: 9px;
    overflow: hidden;
    justify-content: flex-start;
}
.current {
    padding-top: 6px;
    border: 3px solid #fbd667;
    outline: 1px solid #c79a3b;
    outline-offset: -1px;
    border-radius: 3px;
}
.sample {
    width: 59px;
    height: 27px;
    padding-top: 3px;
    margin-bottom: 1px;
    overflow: hidden;
    text-align: left;
    font: 13px/20px Lato, sans-serif;
    color: #000;
}
.heading1, .heading2 {
    font: bold 18px/20px "Liberation Serif", serif;
    color: #365f91;
}
.heading2 {
    font-size: 16px;
    color: #4f81bd;
}
.title {
    padding-top: 0;
    font: 32px/18px "Liberation Serif", serif;
    color: #17365d;
}
.subtitle {
    font: italic 16px/20px "Liberation Serif", serif;
    color: #4f81bd;
}
.subtle, .em, .intense {
    font-style: italic;
}
.subtle {
    color: #808080;
}
.intense {
    font-weight: bold;
    color: #4f81bd;
}
.strong {
    font-weight: bold;
}
.lined {
    height: 23px;
    margin-bottom: 5px;
    border-bottom: 1px solid;
}
.reference, .book {
    font-variant: small-caps;
}
.reference {
    color: #c0504d;
}
.gallery-scroll {
    display: flex;
    flex-direction: column;
}
.gallery-scroll button {
    flex: 1;
    width: 14px;
    border-left: 1px solid #c5c9cf;
    border-bottom: 1px solid #c5c9cf;
    background: #f5f6f8;
}
.gallery-scroll button:last-child {
    border-bottom: 0;
}
.off {
    opacity: .5;
}
.up {
    transform: rotate(180deg);
}

/* document area */
.workspace {
    flex: 1;
    min-height: 0;
    display: flex;
    border-top: 2px solid #b5b8bd;
    background: linear-gradient(#cdd0d5, #b8bbc0);
}
.canvas {
    flex: 1;
    min-width: 0;
    padding: 5px 0 0 129px;
    overflow: hidden;
}
.page {
    max-width: 816px;
    height: 100%;
    padding: 16px 34px 0 96px;
    background: #fff;
    box-shadow: 0 4px 6px #666;
    overflow: hidden;
}
.vscroll {
    width: 17px;
    display: flex;
    flex-direction: column;
    background: #dfe3e9;
}
.vscroll button {
    height: 17px;
}
.vscroll .split {
    height: 6px;
    margin: 0 3px;
    border-bottom: 3px solid #999;
}
.vscroll .ruler {
    border-bottom: 1px solid #c0c4ca;
    height: 19px;
}
.track {
    flex: 1;
    display: flex;
    flex-direction: column;
    justify-content: flex-end;
    padding-bottom: 30px;
}
.thumb {
    display: flex;
    align-items: center;
    justify-content: center;
    height: 28%;
    margin: 0 1px;
    border: 1px solid #9aa0a8;
    border-radius: 2px;
    background: linear-gradient(90deg, #fff, #dde1e6);
}

/* portal screens */
.portal {
    font-family: "Liberation Sans", Arial, sans-serif;
    font-size: 7px;
    line-height: 9px;
    color: #111;
}
.top-tabs {
    display: flex;
    height: 20px;
    background: #336;
    color: #fff;
    font-weight: bold;
    line-height: 18px;
    overflow: hidden;
}
.top-tabs a {
    padding: 0 4px;
    height: 18px;
    border-right: 1px solid #cdd6e6;
    border-bottom: 1px solid #cdd6e6;
}
.top-tabs .on {
    height: 20px;
    color: #111;
    background: #aab9d1;
    border-bottom: 0;
}
.sub-tabs {
    display: flex;
    align-items: center;
    height: 22px;
    padding-left: 3px;
    background: #aab9d1;
    border-bottom: 2px solid #1f6a9a;
}
.sub-tabs a {
    padding-right: 4px;
    margin-right: 4px;
    border-right: 1px solid #cdd6e6;
}
.sub-tabs a:last-child {
    border-right: 0;
}
.sub-tabs .on {
    font-weight: bold;
}
.crumb {
    display: flex;
    justify-content: space-between;
    align-items: center;
    height: 18px;
    padding: 0 4px 0 2px;
    margin-bottom: 2px;
    background: #cadaea;
}
.history a {
    color: #2a50b8;
    text-decoration: underline;
}
.history span {
    color: #999;
}
.portal-body {
    display: flex;
    align-items: flex-start;
    gap: 6px;
}
aside {
    width: 108px;
    padding-bottom: 2px;
    border-bottom: 2px solid #a9bcd9;
}
.collapse {
    display: flex;
    justify-content: space-between;
    align-items: center;
    height: 11px;
    background: #aab9d1;
    border-bottom: 1px solid #222;
}
.collapse svg {
    width: 3px;
    height: 7px;
    margin: 0 1px;
    fill: #1c5fa5;
}
.collapse span {
    display: flex;
    background: #8ab8e8;
}
.portal h2 {
    display: flex;
    justify-content: space-between;
    align-items: center;
    height: 23px;
    padding: 0 1px 0 2px;
    color: #fff;
    background: #336;
    border-bottom: 1px solid #dce6f2;
}
.pic-icon {
    width: 8px;
    height: 15px;
    margin-left: 3px;
    vertical-align: middle;
}
aside ul {
    height: 97px;
    padding: 3px 0 0 5px;
    list-style: none;
    background: #aab9d1;
    border-right: 1px solid #777f8f;
}
aside li {
    display: flex;
    align-items: center;
    height: 17px;
}
aside li::before {
    content: "";
    width: 2px;
    height: 2px;
    margin-right: 3px;
    background: #000;
}
aside ul + h2 {
    margin-top: 4px;
    box-shadow: 0 -2px #b7cde8;
}
.here {
    padding: 1px;
    color: #fff;
    background: #336;
    font-weight: bold;
}
.hover {
    text-decoration: underline;
}
.content {
    flex: 1;
    min-width: 0;
    padding-top: 10px;
}
.content h2 {
    height: 24px;
    padding: 0 2px 0 7px;
    border-bottom: 2px solid #1f6a9a;
}
.vendor {
    height: 59px;
    margin: 1px 0 4px 4px;
    display: grid;
    grid-template-rows: 15px 16px 1fr;
    border: 1px solid #222;
    border-bottom-width: 2px;
    background: #b5cde6;
    box-shadow: 0 3px #aab9d1;
}
.vendor div + div {
    border-top: 1px solid #e3eef8;
}
.vendor-row {
    display: flex;
    justify-content: space-between;
    align-items: flex-start;
    padding: 3px 2px 0 0;
    color: #999;
}
.portal input, .portal select {
    height: 16px;
    border: 1px solid #a9b3c0;
    background-color: #d8e5f4;
}
.portal input {
    width: 66px;
    padding-left: 2px;
}
.vendor .vendor-name {
    width: 118px;
    padding-left: 0;
}
.vendor label input {
    width: 79px;
}
.frame {
    margin-top: 13px;
}
.frame-body {
    height: 247px;
    border-left: 5px solid #e9eef3;
    border-top: 1px solid #e3eef8;
    background: #cadaea;
    overflow: hidden;
}
.partners {
    width: 503px;
    margin: 3px 0 15px 3px;
}
.toolbar {
    display: flex;
    align-items: center;
    justify-content: space-between;
    height: 23px;
    padding: 0 3px;
    background: #a2bfe6;
}
.toolbar label {
    font-weight: bold;
}
.toolbar select {
    width: 64px;
    padding-left: 2px;
    font-weight: normal;
    border-color: #778;
    background: url("data:image/svg+xml,%3Csvg xmlns='http://www.w3.org/2000/svg' width='8' height='14'%3E%3Cpath d='M0 0h8v14H0z' fill='%23c8d0da'/%3E%3Cpath d='M1 5h6L4 10z' fill='%23333'/%3E%3C/svg%3E") no-repeat right center #fff;
}
.links {
    display: flex;
    gap: 4px;
}
.portal table {
    width: 100%;
    table-layout: fixed;
    border-collapse: collapse;
}
.portal th {
    height: 20px;
    padding: 0 0 0 1px;
    font-weight: normal;
    text-align: left;
    background: #b1b1b1;
    border: 1px solid #ddd;
    border-left: 0;
}
.portal th span {
    display: flex;
    justify-content: space-between;
    align-items: center;
}
.portal th span svg {
    width: 5px;
    height: 10px;
}
.portal td {
    height: 20px;
    padding: 0 3px;
    background: #fff;
    border: 1px solid #c4c4c4;
    border-bottom-color: #aaa;
    overflow: hidden;
}
.portal td:first-child {
    background: #ccc;
}
.partners th:nth-child(1) { width: 11px; }
.partners th:nth-child(2) { width: 55px; }
.partners th:nth-child(3) { width: 44px; }
.partners th:nth-child(4) { width: 84px; }
.partners th:nth-child(5) { width: 72px; }
.partners th:nth-child(6) { width: 46px; }
.partners th:nth-child(7) { width: 43px; }
.partners th:nth-child(8) { width: 29px; }
.partners th:nth-child(9) { width: 42px; }
.partners th:nth-child(10) { width: 20px; }
.partners td:nth-child(2) {
    padding: 0 0 0 1px;
}
/* remains of wiped-out cell values */
.portal hr {
    height: 1px;
    margin: 9px 0 0;
    border: 0;
    background: repeating-linear-gradient(90deg, #999 0 2px, #fff 2px 3px, #ccc 3px 4px, #fff 4px 5px);
}
.portal hr.dark {
    background: repeating-linear-gradient(90deg, #222 0 3px, #fff 3px 4px, #777 4px 6px, #fff 6px 7px);
}
.portal hr.half {
    width: 50%;
}
.portal td:nth-child(7) hr.half {
    margin-top: 0;
}
.portal .trace-top hr {
    margin: 0 0 9px;
}
.portal h3 {
    height: 20px;
    padding-left: 3px;
    line-height: 19px;
    background: #b5cde6;
    border-bottom: 1px solid #e3eef8;
}
.terms {
    display: flex;
    gap: 39px;
    height: 100px;
    padding: 9px 0 0 3px;
}
.terms div {
    display: flex;
    flex-direction: column;
    gap: 5px;
}
.terms h4 {
    width: 66px;
    font-weight: normal;
    font-size: 9px;
    line-height: 15px;
}
.next-band {
    height: 6px;
    background: #b5cde6;
}
.hscroll {
    display: flex;
    align-items: center;
    height: 16px;
    border: 1px solid #4c8ab5;
    background: #e9f2fb;
}
.hscroll svg {
    width: 7px;
    height: 6px;
}
.hscroll span {
    width: 492px;
    height: 14px;
    border: 1px solid #4c8ab5;
    background: #dae8f5;
}
.hscroll svg:last-child {
    margin-left: auto;
}

/* second screen, scrolled down to the attachments */
.second {
    margin-top: 4px;
}
.second .top-tabs {
    height: 12px;
    line-height: 4px;
}
.second .top-tabs a {
    height: 11px;
}
.second .top-tabs .on {
    height: 12px;
}
.second .sub-tabs {
    height: 21px;
}
.second .crumb {
    height: 16px;
}
.second aside h2 {
    height: 21px;
}
.second aside ul {
    height: 89px;
    padding-top: 2px;
}
.second aside li {
    height: 16px;
}
.second .content {
    padding-top: 9px;
}
.second .content h2 {
    height: 23px;
}
.second .vendor {
    height: 54px;
}
.second .vendor-row {
    padding-top: 1px;
}
.second .vendor input {
    height: 14px;
}
.second .frame {
    margin-top: 12px;
}
.second .frame-body {
    height: 227px;
    border-bottom: 14px solid #e9eef3;
}
.scrolled {
    height: 60px;
    padding-top: 0;
    margin-top: -5px;
}
.scrolled input {
    height: 15px;
}
.second .frame-body h3 {
    height: 19px;
    margin-top: 5px;
}
.attachments {
    height: 136px;
    padding: 10px 3px;
    background: #b5cde6;
}
.attach-table {
    width: 170px;
    margin-bottom: 4px;
}
.second .toolbar {
    height: 21px;
    padding: 0 1px 0 3px;
}
.second .toolbar select {
    width: 61px;
    height: 15px;
    padding-left: 0;
}
.second .links {
    gap: 2px;
}
.second th {
    height: 19px;
}
.second td {
    height: 18px;
    background: #d8e5f4;
}
.second th:first-child {
    width: 11px;
}
.select-all {
    display: block;
    width: 7px;
    height: 10px;
}
.yellow {
    height: 14px;
    padding: 0 1px;
    border: 1px solid #a89a62;
    background: #fcec9c;
}
.pager {
    display: flex;
    align-items: center;
    gap: 1px;
    height: 20px;
    padding-left: 4px;
    background: #aaa;
}
.pager span {
    margin: 0 2px;
}
.pager em {
    font-style: normal;
    background: #d8e5f4;
}
.pager button {
    width: 8px;
    height: 14px;
    border: 1px solid #d8cfae;
    background: #f5efd8;
}
.pager svg {
    width: 5px;
    height: 9px;
}
.upload {
    display: flex;
    height: 14px;
}
.upload input {
    height: 14px;
    background-color: #fff;
}
.browse {
    padding: 0 1px;
    border: 1px solid #999;
    background: #eee;
}

/* status bar */
.statusbar {
    display: flex;
    align-items: center;
    height: 22px;
    padding-right: 4px;
    border-top: 1px solid #8b939e;
    background: linear-gradient(#f3f5f7, #dfe2e6 20%, #bfc3c8);
}
.statusbar > button {
    height: 20px;
    padding: 0 9px;
    border-right: 1px solid #a2a7ae;
}
.views {
    display: flex;
    height: 20px;
    padding-left: 4px;
    border-left: 1px solid #a2a7ae;
}
.views button {
    width: 18px;
}
.views .on {
    border: 1px solid #c79a3b;
    border-radius: 2px;
    background: #fbdc75;
}
.statusbar .percent {
    border: 0;
    padding: 0 8px 0 10px;
}
.statusbar .zoom-button {
    width: 16px;
    height: 16px;
    padding: 0;
    border: 1px solid #8b919a;
    border-radius: 50%;
    background: #f4f5f7;
}
.zoom-slider {
    appearance: none;
    width: 100px;
    height: 16px;
    background: linear-gradient(#8e97a8, #8e97a8) no-repeat center / 100% 1px;
}
.zoom-slider::-webkit-slider-thumb {
    appearance: none;
    width: 9px;
    height: 13px;
    border: 1px solid #6e7580;
    border-radius: 1px 1px 5px 5px;
    background: #f4f5f7;
}

/* taskbar */
.taskbar {
    position: relative;
    display: flex;
    height: 40px;
    border-top: 1px solid #1c3550;
    box-shadow: inset 0 1px #8cc3e6;
    background: linear-gradient(90deg, #185a92, #2a90cd 10%, #3b9fd6 22%, #4aa9dc 30%, #2f92cf 40%, #2981c9 55%, #1f68b3 75%, #1c5ca5 88%, #14457f 90%, #123a6b);
}
.glow {
    position: absolute;
    width: 100%;
    height: 100%;
}
.task {
    position: relative;
    width: 60px;
    margin-right: 2px;
}
.start {
    width: 54px;
    margin-right: 6px;
}
.open {
    border: 1px solid #14354d;
    border-radius: 3px;
    box-shadow: inset 0 0 0 1px rgba(255, 255, 255, .6);
    background: linear-gradient(135deg, rgba(255, 255, 255, .6), rgba(255, 255, 255, .15));
}
.task + .open {
    margin-left: -1px;
}
.taskbar .outlook {
    width: 52px;
    margin: 0 12px 0 0;
    background: linear-gradient(#f4e27a, #eeb04b 50%, #d9813c);
    box-shadow: inset 0 0 0 1px rgba(255, 255, 255, .6), 3px 0 #7cc0e4, 4px 0 #1e5f8a, 7px 0 #7cc0e4;
}
.taskbar .word {
    width: 54px;
    background: linear-gradient(135deg, #e6f4fc, #8ac6e8);
    box-shadow: inset 0 0 0 1px #fff, 4px 0 #7cc0e4, 5px 0 #1e5f8a;
}
.tray {
    position: relative;
    display: flex;
    align-items: center;
    gap: 10px;
    color: #fff;
}
.tray button {
    min-width: 16px;
}
.tray time {
    margin: 0 12px 0 8px;
    text-align: center;
    line-height: 17px;
}
.show-desktop {
    position: relative;
    width: 14px;
    margin-right: 1px;
    border: 1px solid #6f97bd;
    background: linear-gradient(#7fa0bd, #1c3f68 40%, #163a66);
}
```
